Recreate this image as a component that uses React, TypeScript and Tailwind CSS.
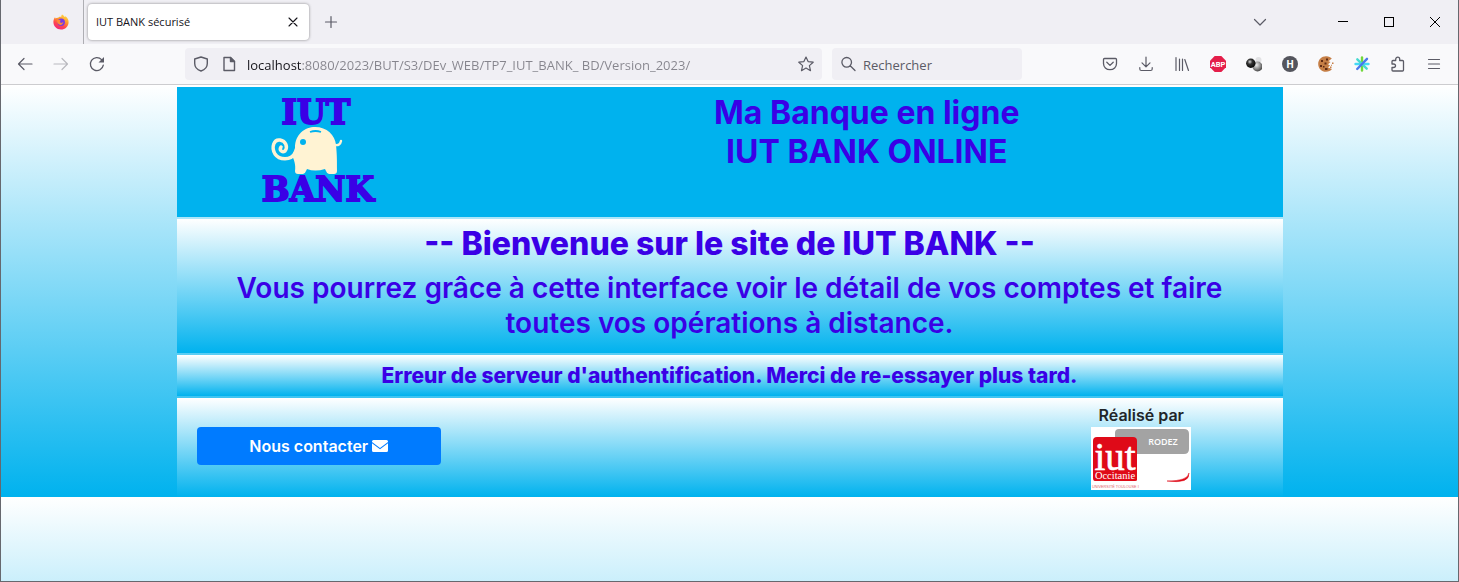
import type { ReactNode } from 'react';

type IconProps = { label: string; className?: string; children: ReactNode };

function ToolButton({ label, className = '', children }: IconProps) {
  return (
    <button
      type="button"
      aria-label={label}
      className={`flex size-4 shrink-0 items-center justify-center text-[#5b5b66] ${className}`}
    >
      {children}
    </button>
  );
}

function Line({ d, width = 1.2 }: { d: string; width?: number }) {
  return (
    <svg viewBox="0 0 16 16" className="size-4 shrink-0" fill="none" stroke="currentColor" strokeWidth={width} strokeLinecap="round" strokeLinejoin="round" aria-hidden="true">
      <path d={d} />
    </svg>
  );
}

function FirefoxLogo() {
  return (
    <svg viewBox="0 0 16 16" className="size-4" aria-hidden="true">
      <defs>
        <linearGradient id="fire" x1="0.8" y1="0" x2="0.3" y2="1">
          <stop offset="0" stopColor="#ffe14a" />
          <stop offset="0.4" stopColor="#ff9a2b" />
          <stop offset="0.7" stopColor="#ff4650" />
          <stop offset="1" stopColor="#f0247e" />
        </linearGradient>
      </defs>
      <path d="M9 0.4C10.5 1.2 11.200 2 11.600 2.900C12.300 2.700 12.500 2.300 12.500 2.300C14.600 3.600 15.700 6 15.600 8.500C15.400 12.600 12.200 15.600 8 15.600C3.700 15.600 0.400 12.300 0.400 8.100C0.400 6.200 1 4.600 2 3.300L2.600 4.500C3.400 3.800 4.200 3.700 5 3.900C5.600 2.800 7 2.500 8.300 2.800C8.200 1.800 8.500 1 9 0.400Z" fill="url(#fire)" />
      <circle cx="8.200" cy="8.300" r="3.700" fill="#7a3be0" />
      <path d="M4 6.300C5.500 5.300 7 6 7.800 7C6.800 7.200 6.500 7.900 7.300 8.600C8.200 9.300 9.600 8.800 10.300 8.100C10 10.600 7.800 11.400 6.200 10.600C4.700 9.900 3.900 8.300 4 6.300Z" fill="#ff8a35" />
    </svg>
  );
}

function TabStrip() {
  return (
    <div className="flex h-11 items-center bg-[#f0eff4]">
      <div className="flex h-full w-[83px] shrink-0 items-center justify-end border-r border-[#aeaeb3] pr-[14px]">
        <button type="button" aria-label="Firefox View">
          <FirefoxLogo />
        </button>
      </div>
      <div role="tablist" className="pl-1">
        <div role="tab" aria-selected="true" className="flex h-9 w-[221px] items-center justify-between rounded bg-white px-2 shadow-[0_0_3px_rgba(0,0,0,0.45)]">
          <span className="font-['Open_Sans','Noto_Sans',sans-serif] text-[11px] text-[#15141a]">IUT BANK sécurisé</span>
          <button type="button" aria-label="Fermer l’onglet" className="flex size-4 items-center justify-center text-[#15141a]">
            <Line d="M4 4L12 12M12 4L4 12" width={1.1} />
          </button>
        </div>
      </div>
      <ToolButton label="Nouvel onglet" className="ml-[14px]">
        <Line d="M8 2.500V13.500M2.500 8H13.500" />
      </ToolButton>
      <div className="ml-auto flex items-center pr-[15px]">
        <ToolButton label="Lister les onglets">
          <Line d="M2.500 5.500L8 11L13.500 5.500" />
        </ToolButton>
        <div className="ml-[67px] flex gap-[30px]">
          <ToolButton label="Réduire">
            <svg viewBox="0 0 16 16" className="size-4" fill="#000" shapeRendering="crispEdges" aria-hidden="true"><path d="M3 7H13V8H3Z" /></svg>
          </ToolButton>
          <ToolButton label="Agrandir">
            <svg viewBox="0 0 16 16" className="size-4" fill="none" stroke="#000" shapeRendering="crispEdges" aria-hidden="true"><path d="M3.500 3.500H12.500V12.500H3.500Z" /></svg>
          </ToolButton>
          <ToolButton label="Fermer">
            <svg viewBox="0 0 16 16" className="size-4" fill="none" stroke="#000" aria-hidden="true"><path d="M3 3L13 13M13 3L3 13" /></svg>
          </ToolButton>
        </div>
      </div>
    </div>
  );
}

function Extensions() {
  return (
    <div className="ml-auto flex items-center gap-5 pr-4">
      <ToolButton label="Pocket">
        <Line d="M2.500 2.500H13.500Q14.500 2.500 14.500 3.500V7.500C14.500 11 11.700 13.700 8 13.700C4.300 13.700 1.500 11 1.500 7.500V3.500Q1.500 2.500 2.500 2.500ZM4.800 6.300L8 9.400L11.200 6.300" width={1.3} />
      </ToolButton>
      <ToolButton label="Téléchargements">
        <Line d="M8 1V10.500M4 6.800L8 10.800L12 6.800M1.800 11.500V13Q1.800 14.500 3.300 14.500H12.700Q14.200 14.500 14.200 13V11.500" />
      </ToolButton>
      <ToolButton label="Bibliothèque">
        <Line d="M2 1.500V14.500M5.500 3V14.500M8.500 3V14.500M10.800 3.500L14.500 14.500" />
      </ToolButton>
      <ToolButton label="Adblock Plus">
        <svg viewBox="0 0 16 16" className="size-4" aria-hidden="true">
          <path d="M4.700 0H11.300L16 4.700V11.300L11.300 16H4.700L0 11.300V4.700Z" fill="#e41e4a" />
          <text x="8" y="10.800" textAnchor="middle" fontSize="7.500" fontWeight="700" fontFamily="Roboto" fill="#fff">ABP</text>
        </svg>
      </ToolButton>
      <ToolButton label="Extension aux sphères">
        <svg viewBox="0 0 16 16" className="size-4" aria-hidden="true">
          <defs>
            <radialGradient id="dark" cx="0.4" cy="0.35" r="0.65"><stop offset="0" stopColor="#d8d8d8" /><stop offset="0.400" stopColor="#333" /><stop offset="1" stopColor="#080808" /></radialGradient>
            <radialGradient id="grey" cx="0.4" cy="0.35" r="0.7"><stop offset="0" stopColor="#eee" /><stop offset="0.500" stopColor="#999" /><stop offset="1" stopColor="#3a3a3a" /></radialGradient>
          </defs>
          <circle cx="12.500" cy="4" r="3" fill="#e2e2e4" />
          <circle cx="11.500" cy="10.500" r="5" fill="url(#grey)" />
          <circle cx="4.800" cy="7.200" r="4.700" fill="url(#dark)" />
        </svg>
      </ToolButton>
      <ToolButton label="Extension H">
        <svg viewBox="0 0 16 16" className="size-4" aria-hidden="true">
          <circle cx="8" cy="8" r="8" fill="#54555d" />
          <text x="8" y="11.600" textAnchor="middle" fontSize="10" fontWeight="700" fontFamily="Open Sans" fill="#fff">H</text>
        </svg>
      </ToolButton>
      <ToolButton label="Gestion des cookies">
        <svg viewBox="0 0 16 16" className="size-4" aria-hidden="true">
          <path d="M8 0.300C10.500 0.200 12.800 1.200 13.800 2.600L10.500 5.200L12.500 6L10 8.200L12 9.600L10 11.500L14 13C12.600 14.800 10.600 15.800 8 15.800C3.600 15.800 0.200 12.400 0.200 8C0.200 3.600 3.600 0.300 8 0.300Z" fill="#c57e46" />
          <path d="M3 4H5V6H3ZM8 2.500H10V4.500H8ZM2 9H4V11H2ZM6.500 6.500H8.500V8.500H6.500ZM7 12H9.500V14H7ZM5 10H6.500V11.500H5Z" fill="#5e2a14" />
          <path d="M12 10.500H13.500V12H12ZM14 6.500H15.500V8H14ZM13 8.700H14V9.700H13Z" fill="#c57e46" />
        </svg>
      </ToolButton>
      <ToolButton label="Extension étoile">
        <svg viewBox="0 0 16 16" className="size-4" fill="none" strokeWidth="2.400" strokeLinecap="round" aria-hidden="true">
          <path d="M8 1.500V14.500" stroke="#72d83c" />
          <path d="M1.500 8H14.500" stroke="#45d9f5" />
          <path d="M3.300 3.300L12.700 12.700" stroke="#45d9d0" />
          <path d="M3.200 13L13 2.800" stroke="#4a78ec" />
        </svg>
      </ToolButton>
      <ToolButton label="Extensions">
        <Line d="M3 4.500H5.700V3.200C5.700 0.500 9.700 0.500 9.700 3.200V4.500H12.500Q13.500 4.500 13.500 5.500V14Q13.500 15 12.500 15H3Q2 15 2 14V11.500H3.500C6.200 11.500 6.200 8 3.500 8H2V5.500Q2 4.500 3 4.500Z" width={1.3} />
      </ToolButton>
      <ToolButton label="Menu">
        <Line d="M2.500 3.500H13.500M2.500 8H13.500M2.500 12.500H13.500" />
      </ToolButton>
    </div>
  );
}

function NavBar() {
  return (
    <div className="flex h-[41px] items-center border-b border-[#cccccf] bg-[#f9f9fb]">
      <div className="flex w-[184px] shrink-0 items-center gap-5 pl-4">
        <ToolButton label="Page précédente"><Line d="M1.500 8H15M7 2.500L1.500 8L7 13.500" /></ToolButton>
        <ToolButton label="Page suivante" className="opacity-40"><Line d="M1 8H14.500M9 2.500L14.500 8L9 13.500" /></ToolButton>
        <ToolButton label="Actualiser">
          <svg viewBox="0 0 16 16" className="size-4" fill="none" stroke="currentColor" strokeWidth="1.300" strokeLinecap="round" aria-hidden="true">
            <path d="M14.300 9.200A6.500 6.500 0 1 1 12.600 3.600" />
            <path d="M15 1V6.500H9.500Z" fill="currentColor" stroke="none" />
          </svg>
        </ToolButton>
      </div>
      <div className="flex h-8 w-[637px] items-center rounded bg-[#f0eff4] px-2 text-[#5b5b66]">
        <ToolButton label="Protection"><Line d="M8 1L14.300 3V7.500C14.300 11 11.500 13.800 8 15C4.500 13.800 1.700 11 1.700 7.500V3Z" width={1.4} /></ToolButton>
        <ToolButton label="Informations du site" className="ml-3">
          <svg viewBox="0 0 16 16" className="size-4" fill="none" stroke="currentColor" strokeWidth="1.400" strokeLinejoin="round" aria-hidden="true">
            <path d="M3 1.500H9.500L13.500 5.500V14.500H3Z" /><path d="M9.500 1.500V5.500H13.500Z" fill="currentColor" />
          </svg>
        </ToolButton>
        <input
          aria-label="Adresse"
          type="text"
          defaultValue="localhost:8080/2023/BUT/S3/DEv_WEB/TP7_IUT_BANK_ BD/Version_2023/"
          className="ml-[10px] h-8 min-w-0 flex-1 bg-[linear-gradient(90deg,#15141a_54px,#86858d_54px)] bg-clip-text pt-[2px] font-['Open_Sans','Noto_Sans',sans-serif] text-[13px] text-transparent outline-none"
        />
        <ToolButton label="Ajouter aux marque-pages">
          <Line d="M8 1L10.100 5.600L15.200 6.200L11.400 9.600L12.500 14.700L8 12.100L3.500 14.700L4.600 9.600L0.800 6.200L5.900 5.600Z" />
        </ToolButton>
      </div>
      <div className="ml-[10px] flex h-8 w-[190px] items-center gap-[7px] rounded bg-[#f0eff4] px-2 text-[#5b5b66]">
        <Line d="M11.500 6.300A4.800 4.800 0 1 1 1.900 6.300A4.800 4.800 0 1 1 11.500 6.300M10.200 9.800L15 14.500" width={1.3} />
        <input
          aria-label="Rechercher"
          type="text"
          placeholder="Rechercher"
          className="h-8 w-full min-w-0 bg-transparent pt-[2px] font-['Open_Sans','Noto_Sans',sans-serif] text-[13px] outline-none placeholder:text-[#5b5b66]"
        />
      </div>
      <Extensions />
    </div>
  );
}

function BankLogo() {
  return (
    <svg viewBox="0 0 124 120" className="h-[120px] w-[124px]" role="img" aria-label="IUT BANK">
      <g fill="#3a00e6" stroke="#3a00e6" strokeWidth="1.800" strokeLinejoin="miter" fontFamily="DejaVu Serif" fontWeight="700" textAnchor="middle">
        <text x="60" y="30" fontSize="33">IUT</text>
        <text x="62" y="107" fontSize="33">BANK</text>
      </g>
      <g fill="#fff3d3">
        <path d="M39 54C39 40 49 33 59 33C71 33 79 41 80 51C81 61 81 66 81 77Q81 80 78 80H73Q71 80 70 77L69 75Q59 78 51 75L50 77Q49 80 47 80H42Q39 80 39 77C40 71 38 65 36 62Z" />
        <path d="M39 59C35 67 23 66 19 60C15 53 18 45 24 46C30 47 32 53 29 57C26 59 23 56 25 53" fill="none" stroke="#fff3d3" strokeWidth="3.500" strokeLinecap="round" />
        <path d="M79 51Q84 52 85 47" fill="none" stroke="#fff3d3" strokeWidth="2.400" strokeLinecap="round" />
      </g>
      <circle cx="47" cy="48" r="3" fill="#00b2ee" />
      <path d="M54 38Q59.500 36 65 38" fill="none" stroke="#00b2ee" strokeWidth="1.800" />
    </svg>
  );
}

function IutLogo() {
  return (
    <svg viewBox="0 0 100 63" className="h-[63px] w-[100px]" role="img" aria-label="IUT Occitanie Rodez">
      <path d="M0 0H100V63H0Z" fill="#fff" />
      <path d="M24 6Q24 2 28 2H93Q98 2 98 7V22Q98 27 93 27H24Z" fill="#a3a3a3" />
      <text x="72" y="18" fontSize="9" fontWeight="600" fontFamily="Open Sans" fill="#fff" textAnchor="middle">RODEZ</text>
      <path d="M6 10H42Q46 10 46 14V53Q46 54 44 54H4Q2 54 2 51V14Q2 10 6 10Z" fill="#df0a18" />
      <text x="24" y="43" fontSize="39" fontFamily="Liberation Serif" fill="#fff" stroke="#fff" strokeWidth="0.600" textAnchor="middle">iut</text>
      <text x="24" y="52" fontSize="10.500" fontFamily="Liberation Serif" fill="#fff" textAnchor="middle">Occitanie</text>
      <text x="1" y="61" fontSize="3.800" fontFamily="Liberation Sans" fill="#e0636b">UNIVERSITÉ TOULOUSE I</text>
      <path d="M76 54Q97 54 98 46Q99 57 76 54Z" fill="#df0a18" stroke="#df0a18" strokeWidth="0.500" />
    </svg>
  );
}

function BankPage() {
  return (
    <main className="flex flex-1 flex-col font-['Inter',sans-serif] text-[#3a00e6]">
      <div className="bg-[linear-gradient(to_bottom,#ffffff,#00b2ee)]">
        <div className="mx-auto flex w-full max-w-[1106px] flex-col gap-[2px] pt-[2px] text-center">
          <header className="grid h-[130px] grid-cols-4 bg-[#00b2ee] px-1">
            <div className="flex justify-center pt-[7px]"><BankLogo /></div>
            <h1 className="col-span-3 pt-[6px] text-[32px] leading-[39px] font-bold">
              Ma Banque en ligne<br />IUT BANK ONLINE
            </h1>
          </header>
          <section className="bg-[linear-gradient(to_bottom,#ffffff,#00b2ee)] px-4 pt-[6px] pb-3">
            <h2 className="pb-2 text-[32px] leading-[38px] font-extrabold">-- Bienvenue sur le site de IUT BANK --</h2>
            <p className="text-[28px] leading-[35px] font-semibold">
              Vous pourrez grâce à cette interface voir le détail de vos comptes et faire<br />toutes vos opérations à distance.
            </p>
          </section>
          <p role="alert" className="h-[41px] bg-[linear-gradient(to_bottom,#ffffff,#00b2ee)] text-[21px] leading-[41px] font-extrabold">
            Erreur de serveur d'authentification. Merci de re-essayer plus tard.
          </p>
          <footer className="grid h-[99px] grid-cols-4 bg-[linear-gradient(to_bottom,#ffffff,#00b2ee)] px-1">
            <div className="pt-[29px] pr-[14px] pl-4">
              <a href="#contact" className="flex h-[38px] items-center justify-center gap-1 rounded bg-[#007bff] text-[16px] font-semibold text-white">
                Nous contacter
                <svg viewBox="0 0 16 12" className="h-3 w-4" aria-hidden="true">
                  <path d="M1.500 0H14.500Q16 0 16 1.500V2L8 8L0 2V1.500Q0 0 1.500 0ZM0 3.200L8 9.200L16 3.200V10.500Q16 12 14.500 12H1.500Q0 12 0 10.500Z" fill="#fff" />
                </svg>
              </a>
            </div>
            <div className="col-start-4 flex flex-col items-center pt-[5px] text-[#212529]">
              <span className="text-[16px] leading-6 font-semibold">Réalisé par</span>
              <IutLogo />
            </div>
          </footer>
        </div>
      </div>
      <div className="flex-1 bg-[linear-gradient(to_bottom,#ffffff,#00b2ee)] bg-[length:100%_412px]" />
    </main>
  );
}

export default function App() {
  return (
    <div className="flex min-h-screen flex-col border-x border-b border-[#66686e] bg-white">
      <div>
        <TabStrip />
        <NavBar />
      </div>
      <BankPage />
    </div>
  );
}
